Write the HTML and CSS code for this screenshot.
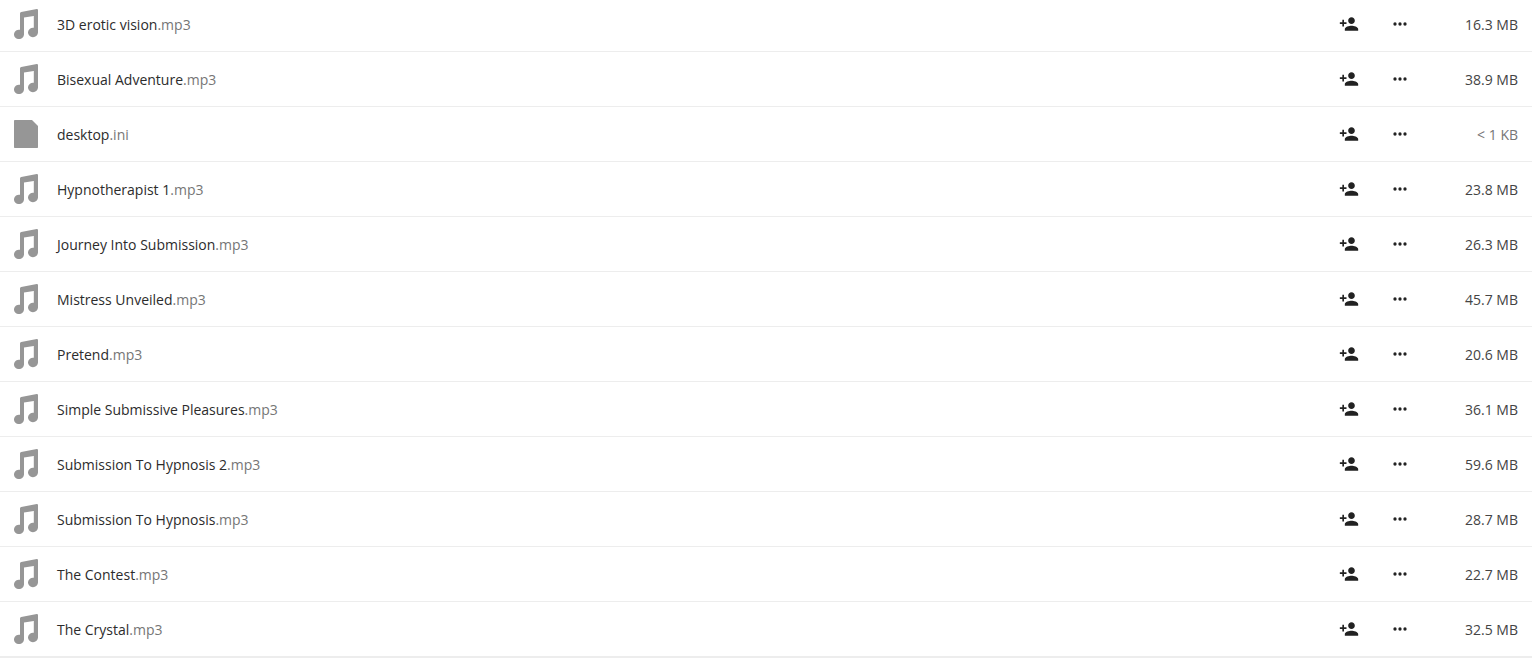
FILE: index.html
```html
<!DOCTYPE html>
<html lang="en">
<head>
    <meta charset="UTF-8">
    <meta name="viewport" content="width=device-width, initial-scale=1.0">
    <title>Files</title>
    <link rel="stylesheet" href="styles.css">
</head>
<body>
    <svg class="sprites" aria-hidden="true">
        <symbol id="icon-audio" viewBox="0 0 24 30">
            <path d="M7.2 2.900 22.800.1Q24 0 24 1.200V23.300A5 4.700 0 1 1 19.800 18.800V7L10 8.500V25.300A5 4.700 0 1 1 6 20.800V4.400Q6 3.200 7.200 2.900Z"/>
        </symbol>
        <symbol id="icon-file" viewBox="0 0 24 30">
            <path d="M.7 1H18L24 7V28.300Q24 29 23.300 29H.7Q0 29 0 28.300V1.700Q0 1 .7 1Z"/>
        </symbol>
        <symbol id="icon-share" viewBox="0 0 24 24">
            <path d="M15 12c2.210 0 4-1.790 4-4s-1.790-4-4-4-4 1.790-4 4 1.790 4 4 4zm-9-2V7H4v3H1v2h3v3h2v-3h3v-2H6zm9 4c-2.670 0-8 1.340-8 4v2h16v-2c0-2.660-5.330-4-8-4z"/>
        </symbol>
        <symbol id="icon-more" viewBox="0 0 24 24">
            <circle cx="6" cy="12" r="2"/>
            <circle cx="12" cy="12" r="2"/>
            <circle cx="18" cy="12" r="2"/>
        </symbol>
    </svg>

    <main class="files">
        <table class="file-table">
            <tbody id="fileList"></tbody>
        </table>
    </main>

    <script>
        const files = [
            { name: '3D erotic vision', ext: '.mp3', size: '16.3 MB' },
            { name: 'Bisexual Adventure', ext: '.mp3', size: '38.9 MB' },
            { name: 'desktop', ext: '.ini', size: '&lt; 1 KB' },
            { name: 'Hypnotherapist 1', ext: '.mp3', size: '23.8 MB' },
            { name: 'Journey Into Submission', ext: '.mp3', size: '26.3 MB' },
            { name: 'Mistress Unveiled', ext: '.mp3', size: '45.7 MB' },
            { name: 'Pretend', ext: '.mp3', size: '20.6 MB' },
            { name: 'Simple Submissive Pleasures', ext: '.mp3', size: '36.1 MB' },
            { name: 'Submission To Hypnosis 2', ext: '.mp3', size: '59.6 MB' },
            { name: 'Submission To Hypnosis', ext: '.mp3', size: '28.7 MB' },
            { name: 'The Contest', ext: '.mp3', size: '22.7 MB' },
            { name: 'The Crystal', ext: '.mp3', size: '32.5 MB' }
        ];

        const fileList = document.getElementById('fileList');

        files.forEach((file) => {
            const isAudio = file.ext === '.mp3';
            const row = document.createElement('tr');
            row.innerHTML = `
                <td class="name-cell">
                    <a href="#" class="file-link">
                        <svg class="file-icon"><use href="#${isAudio ? 'icon-audio' : 'icon-file'}"/></svg>
                        <span class="file-name">${file.name}<span class="file-ext">${file.ext}</span></span>
                    </a>
                </td>
                <td class="actions-cell">
                    <div class="actions">
                        <button type="button" class="action-btn" aria-label="Share"><svg><use href="#icon-share"/></svg></button>
                        <button type="button" class="action-btn" aria-label="Actions"><svg><use href="#icon-more"/></svg></button>
                    </div>
                </td>
                <td class="size-cell ${isAudio ? '' : 'small'}">${file.size}</td>
            `;
            fileList.appendChild(row);
        });
    </script>
</body>
</html>
```
FILE: styles.css
```css
body {
    font-family: "Segoe UI", "Open Sans", sans-serif;
    font-size: 14px;
    line-height: 20px;
    color: #2c2c2c;
    background-color: #fff;
    margin: 0;
}

.sprites {
    display: none;
}

.files {
    overflow: hidden;
}

/* list is scrolled slightly under the top edge */
.file-table {
    width: 100%;
    margin-top: -3px;
    border-spacing: 0;
    border-bottom: 1px solid #ededed;
}

td {
    box-sizing: border-box;
    height: 55px;
    padding: 0;
    border-bottom: 1px solid #ededed;
}

.file-link {
    display: flex;
    align-items: center;
    gap: 19px;
    padding-left: 14px;
    color: inherit;
    text-decoration: none;
}

.file-icon {
    width: 24px;
    height: 30px;
    fill: #969696;
}

.file-name {
    padding-top: 2px;
}

.file-ext {
    color: #767676;
}

.actions-cell {
    width: 102px;
}

.actions {
    display: flex;
}

.action-btn {
    display: flex;
    align-items: center;
    justify-content: center;
    width: 51px;
    height: 44px;
    padding: 0;
    border: none;
    background: none;
    cursor: pointer;
}

.action-btn svg {
    width: 20px;
    height: 20px;
    fill: #222;
}

.size-cell {
    width: 107px;
    padding-top: 2px;
    padding-right: 14px;
    text-align: right;
    color: #444;
}

.size-cell.small {
    color: #767676;
}
```
